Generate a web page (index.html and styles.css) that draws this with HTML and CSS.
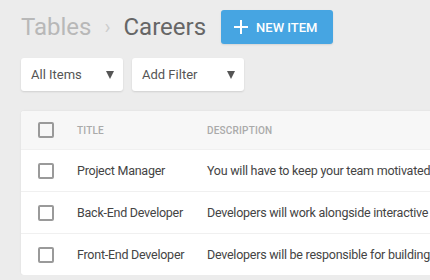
FILE: index.html
```html
<!DOCTYPE html>
<html lang="en">
<head>
    <meta charset="UTF-8">
    <title>Careers</title>
    <link rel="stylesheet" href="styles.css">
</head>
<body>
    <div class="topbar">
        <h1 class="crumbs">
            <span class="crumb-parent">Tables</span>
            <span class="crumb-sep">&rsaquo;</span>
            <span class="crumb-current">Careers</span>
        </h1>
        <button class="btn-new">
            <svg width="14" height="14" viewBox="0 0 14 14"><path d="M7 0v14M0 7h14" stroke="#fff" stroke-width="2"/></svg>
            NEW ITEM
        </button>
    </div>

    <div class="filters">
        <div class="select select-items">All Items <span class="caret"></span></div>
        <div class="select select-filter">Add Filter <span class="caret"></span></div>
    </div>

    <div class="card">
        <div class="row head">
            <span class="check"></span>
            <span class="col-title">Title</span>
            <span class="col-desc">Description</span>
        </div>
        <div class="row">
            <span class="check"></span>
            <span class="col-title">Project Manager</span>
            <span class="col-desc">You will have to keep your team motivated and on track</span>
        </div>
        <div class="row">
            <span class="check"></span>
            <span class="col-title">Back-End Developer</span>
            <span class="col-desc">Developers will work alongside interactive designers</span>
        </div>
        <div class="row">
            <span class="check"></span>
            <span class="col-title">Front-End Developer</span>
            <span class="col-desc">Developers will be responsible for building the interface</span>
        </div>
    </div>
</body>
</html>
```

FILE: styles.css
```css
body {
    margin: 0;
    padding: 10px 0 0 21px;
    background-color: #ececec;
    font-family: Roboto, "Liberation Sans", sans-serif;
    color: #444;
    overflow: hidden;
}
.topbar {
    display: flex;
    align-items: center;
    height: 34px;
}
.crumbs {
    margin: 0 15px 0 0;
    font-size: 24px;
    font-weight: 400;
    display: flex;
    align-items: center;
    gap: 13px;
}
.crumb-parent {
    color: #b8b8b8;
}
.crumb-sep {
    color: #cdcdcd;
    font-size: 20px;
}
.crumb-current {
    color: #666;
}
.btn-new {
    display: flex;
    align-items: center;
    gap: 8px;
    height: 34px;
    width: 112px;
    padding: 0 0 0 13px;
    border: none;
    border-radius: 3px;
    background-color: #46a5e2;
    color: #fff;
    font-family: Roboto, "Liberation Sans", sans-serif;
    font-size: 13px;
    font-weight: 500;
    box-shadow: 0 1px 2px rgba(0, 0, 0, 0.1);
}
.filters {
    display: flex;
    gap: 9px;
    margin-top: 14px;
}
.select {
    display: flex;
    align-items: center;
    justify-content: space-between;
    height: 33px;
    padding: 0 9px 0 10px;
    box-sizing: border-box;
    background: #fff;
    border-radius: 3px;
    box-shadow: 0 1px 2px rgba(0, 0, 0, 0.12);
    font-size: 13px;
    color: #555;
}
.select-items {
    width: 102px;
}
.select-filter {
    width: 112px;
}
.caret {
    width: 0;
    height: 0;
    border-left: 4px solid transparent;
    border-right: 4px solid transparent;
    border-top: 8px solid #555;
}
.card {
    margin-top: 20px;
    width: 640px;
    background: #fff;
    border-radius: 3px;
    box-shadow: 0 0 2px rgba(0, 0, 0, 0.08);
}
.row {
    display: flex;
    align-items: center;
    height: 41px;
    padding-left: 17px;
    border-top: 1px solid #f0f0f0;
    font-size: 12.5px;
    letter-spacing: -0.25px;
    color: #444;
    white-space: nowrap;
}
.row.head {
    height: 38px;
    border-top: none;
    background: #f7f7f7;
    border-radius: 3px 3px 0 0;
    font-size: 10px;
    font-weight: 500;
    color: #aaa;
    text-transform: uppercase;
    letter-spacing: 0.2px;
}
.check {
    width: 12px;
    height: 12px;
    border: 2px solid #9a9a9a;
    border-radius: 2px;
    flex: none;
}
.col-title {
    width: 130px;
    margin-left: 23px;
}
```
